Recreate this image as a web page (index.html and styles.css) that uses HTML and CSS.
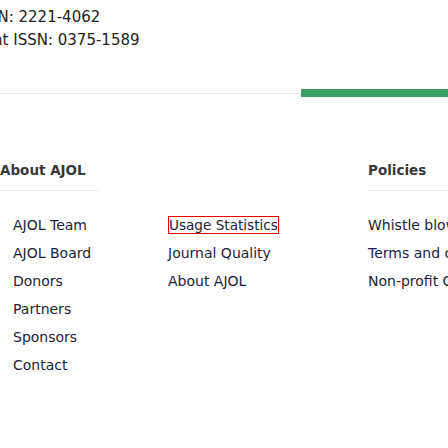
FILE: index.html
```
<!DOCTYPE html>
<html lang="en">
<head>
<meta charset="utf-8">
<title>AJOL</title>
<link rel="stylesheet" href="styles.css">
</head>
<body>
<div class="page">
  <div class="issn">
    <p>ISSN: 2221-4062</p>
    <p>Print ISSN: 0375-1589</p>
  </div>
  <div class="tabs">
    <div class="tab-rule"></div>
    <div class="tab-active"></div>
  </div>
  <footer class="footer">
    <h3 class="col-head head-about">About AJOL</h3>
    <div class="col-head head-empty"></div>
    <h3 class="col-head head-policies">Policies</h3>
    <ul class="links links-about">
      <li><a href="#">AJOL Team</a></li>
      <li><a href="#">AJOL Board</a></li>
      <li><a href="#">Donors</a></li>
      <li><a href="#">Partners</a></li>
      <li><a href="#">Sponsors</a></li>
      <li><a href="#">Contact</a></li>
    </ul>
    <ul class="links links-mid">
      <li><a href="#" class="focused">Usage Statistics</a></li>
      <li><a href="#">Journal Quality</a></li>
      <li><a href="#">About AJOL</a></li>
    </ul>
    <ul class="links links-policies">
      <li><a href="#">Whistle blowing policy</a></li>
      <li><a href="#">Terms and conditions</a></li>
      <li><a href="#">Non-profit Organisation</a></li>
    </ul>
  </footer>
</div>
</body>
</html>
```
FILE: styles.css
```
html, body {
  margin: 0;
  padding: 0;
  background: #fff;
  overflow: hidden;
}
body {
  font-family: "DejaVu Sans", "Liberation Sans", sans-serif;
  width: 448px;
  height: 448px;
}
.page {
  width: 448px;
}
.issn {
  margin-left: -26px;
  padding-top: 6px;
  color: #222;
  font-size: 15px;
  line-height: 23px;
  white-space: nowrap;
}
.issn p {
  margin: 0;
}
.tabs {
  margin-top: 37px;
  display: flex;
  align-items: center;
  height: 8px;
}
.tab-rule {
  width: 301px;
  height: 1px;
  background: #ececec;
}
.tab-active {
  flex: 1;
  height: 8px;
  background: #3ba062;
}
.footer {
  margin-top: 63px;
  display: grid;
  grid-template-columns: 155px 213px 1fr;
  white-space: nowrap;
}
.col-head {
  margin: 0;
  height: 20px;
  padding-bottom: 10px;
  font-size: 13.5px;
  line-height: 20px;
  font-weight: bold;
  color: #383838;
}
.head-about {
  width: 99px;
  border-bottom: 1px solid #ebebeb;
}
.head-policies {
  border-bottom: 1px solid #ebebeb;
}
.links {
  list-style: none;
  margin: 20px 0 0;
  padding: 0;
  font-size: 14px;
  line-height: 28px;
}
.links a {
  color: #1b1d3a;
  text-decoration: none;
}
.links-about {
  padding-left: 13px;
}
.links-mid {
  padding-left: 13px;
}
.links-policies {
  padding-left: 0;
}
.focused {
  display: inline-block;
  font-size: 13.6px;
  line-height: 16px;
  border: 1px solid #e00000;
  padding: 0;
}
```
